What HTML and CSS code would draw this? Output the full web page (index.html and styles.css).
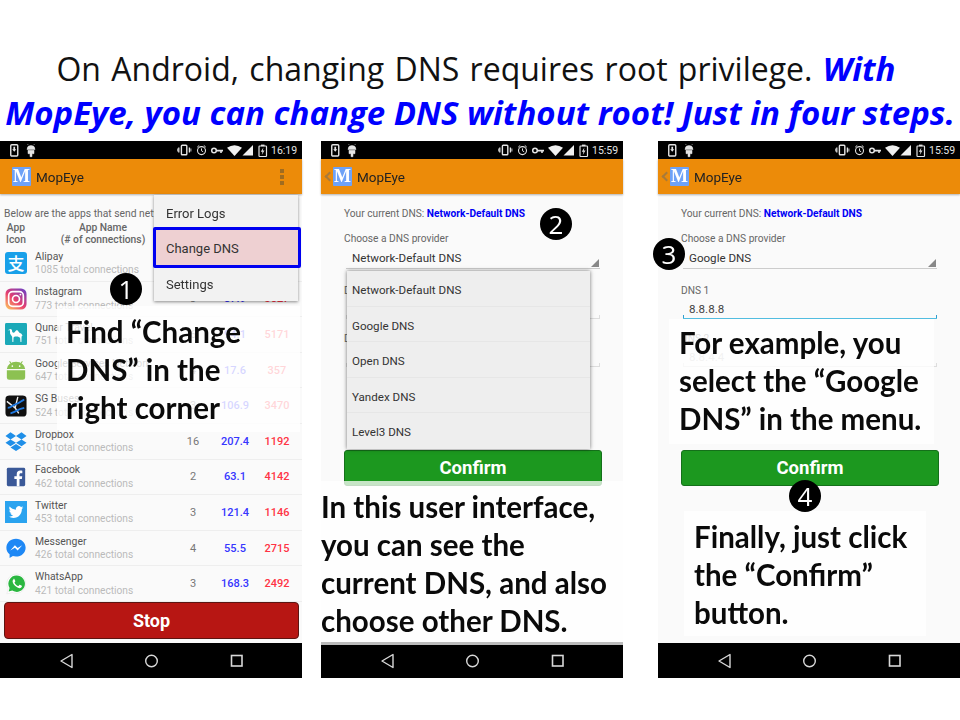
FILE: index.html
```html
<!DOCTYPE html>
<html>
<head>
<meta charset="utf-8">
<title>MopEye DNS</title>
<link rel="stylesheet" href="styles.css">
</head>
<body>

<svg class="sprites">
  <symbol id="status-left" viewBox="0 0 26 18">
    <rect x="0.75" y="3.7" width="7" height="11.3" rx="1" fill="none" stroke="#e4e4e4" stroke-width="1.4"/>
    <path d="M3.4 5.8h1.7v2.4h1.2L4.25 10.7 2.2 8.2h1.2z" fill="#e4e4e4"/>
    <path d="M17 8.6a4 4 0 0 1 8 0zM18 9.3h6v3.4h-2v3h-2v-3h-2zM18.3 4.2l-0.8-1.2M23.7 4.2l0.8-1.2" fill="#e4e4e4" stroke="#e4e4e4" stroke-width="0.5"/>
  </symbol>
  <symbol id="status-right" viewBox="0 0 92 18">
    <rect x="4.4" y="4.2" width="5.4" height="9.6" rx="0.8" fill="none" stroke="#e4e4e4" stroke-width="1.4"/>
    <path d="M1.8 6.5v5M12.4 6.5v5" stroke="#e4e4e4" stroke-width="1.3"/>
    <path d="M0.3 7.5v3M13.9 7.5v3" stroke="#e4e4e4" stroke-width="0.9"/>
    <circle cx="24.5" cy="9.6" r="4" fill="none" stroke="#e4e4e4" stroke-width="1.1"/>
    <path d="M24.5 7.4v2.4l1.7 1M20.2 6.2l2-1.8M28.8 6.2l-2-1.8" fill="none" stroke="#e4e4e4" stroke-width="1"/>
    <circle cx="37" cy="9.5" r="2.3" fill="none" stroke="#e4e4e4" stroke-width="1.5"/>
    <path d="M39 8.7h7v1.7h-1.2v1.5h-1.6v-1.5h-4.2z" fill="#e4e4e4"/>
    <path d="M50 6.8Q57.5 1.8 65 6.8L57.5 15z" fill="#f0f0f0"/>
    <path d="M65.5 14.5L76 14.5V4z" fill="#f0f0f0"/>
    <rect x="82" y="5" width="7.5" height="10.5" rx="0.7" fill="none" stroke="#e4e4e4" stroke-width="1.2"/>
    <rect x="84" y="3.6" width="3.5" height="1.6" fill="#e4e4e4"/>
    <path d="M86.4 6.4L83.8 10.8h1.7l-0.7 3.2 2.7-4.6h-1.7z" fill="#e4e4e4"/>
  </symbol>
  <symbol id="nav-icons" viewBox="0 0 302 35">
    <path d="M72 11.5v13l-11-6.5z" fill="none" stroke="#d8d8d8" stroke-width="1.4" stroke-linejoin="round"/>
    <circle cx="151.5" cy="18" r="5.8" fill="none" stroke="#d8d8d8" stroke-width="1.4"/>
    <rect x="231.5" y="12.5" width="10.5" height="10.5" fill="none" stroke="#d8d8d8" stroke-width="1.6"/>
  </symbol>
</svg>

<h1 class="title"><span class="line-one">On Android, changing DNS requires root privilege. <em>With</em></span><br><em>MopEye, you can change DNS without root! Just in four steps.</em></h1>

<main class="phones">

  <section class="phone">
    <div class="shot">
      <div class="status">
        <svg class="status-left"><use href="#status-left"/></svg>
        <svg class="status-right"><use href="#status-right"/></svg>
        <span class="clock">16:19</span>
      </div>
      <header class="appbar">
        <span class="app-logo">M</span>
        <span class="app-name">MopEye</span>
        <span class="kebab"><i></i><i></i><i></i></span>
      </header>
      <div class="content">
        <p class="intro">Below are the apps that send network data</p>
        <div class="list-head">
          <span class="head-icon">App<br>Icon</span>
          <span class="head-name">App Name<br>(# of connections)</span>
        </div>

        <div class="row">
          <span class="icon alipay">支</span>
          <div class="app"><b>Alipay</b><small>1085 total connections</small></div>
          <span class="count">5</span><span class="speed">88.2</span><span class="rtt">2210</span>
        </div>
        <div class="row">
          <svg class="icon" viewBox="0 0 24 24">
            <defs><linearGradient id="insta" x1="0.1" y1="1" x2="0.9" y2="0">
              <stop offset="0" stop-color="#fdc35f"/><stop offset="0.45" stop-color="#e8406f"/><stop offset="1" stop-color="#6d3fc4"/>
            </linearGradient></defs>
            <rect x="0.5" y="0.5" width="23" height="23" rx="6" fill="url(#insta)"/>
            <rect x="4" y="4" width="16" height="16" rx="4.5" fill="none" stroke="#fff" stroke-width="1.8"/>
            <circle cx="12" cy="12" r="3.8" fill="none" stroke="#fff" stroke-width="1.8"/>
            <circle cx="16.8" cy="7.2" r="1" fill="#fff"/>
          </svg>
          <div class="app"><b>Instagram</b><small>773 total connections</small></div>
          <span class="count">3</span><span class="speed">87.9</span><span class="rtt">3527</span>
        </div>
        <div class="row">
          <svg class="icon" viewBox="0 0 24 24">
            <rect width="24" height="24" rx="1.5" fill="#1ba9b8"/>
            <path d="M3.5 7.5l2.6-1 1.4 0.8 0.4 2.6c1 1.2 2.2 1 3-0.3 1-2.2 2.8-2.4 3.8-0.2 0.7 1.4 2 2 3.2 2.2l1.2 2-1 1.2-0.2 6h-1l-0.4-4.8-2.6-1.4h-3.2l-1.4 1.2-0.2 5h-1l-0.3-5.8-2.2-3.4-0.2-3.6-2.5-0.2z" fill="#fff"/>
          </svg>
          <div class="app"><b>Qunar Travel</b><small>751 total connections</small></div>
          <span class="count">6</span><span class="speed">94.1</span><span class="rtt">5171</span>
        </div>
        <div class="row">
          <svg class="icon" viewBox="0 0 24 24">
            <path d="M2 11a10 8 0 0 1 20 0zM2 12.2h20v8a2.5 2.5 0 0 1-2.5 2.5h-15A2.5 2.5 0 0 1 2 20.200z" fill="#8cc152"/>
            <path d="M6.500 4.800L5 2.500M17.500 4.800L19 2.500" stroke="#8cc152" stroke-width="1.1"/>
            <circle cx="8" cy="7.800" r="0.9" fill="#fff"/><circle cx="16" cy="7.800" r="0.9" fill="#fff"/>
          </svg>
          <div class="app"><b>Google Services Network</b><small>647 total connections</small></div>
          <span class="count">4</span><span class="speed">17.6</span><span class="rtt">357</span>
        </div>
        <div class="row">
          <svg class="icon" viewBox="0 0 24 24">
            <rect x="0.500" y="0.500" width="23" height="23" rx="4" fill="#101010"/>
            <path d="M2 7l9 7 4 6M14 2l-3 12" fill="none" stroke="#eee" stroke-width="1.500"/>
            <path d="M3 14c4 0 5-3 9-4 4-1 6-4 9-5M6 20c4-1 7-3 11-5l4-1" fill="none" stroke="#1e78e0" stroke-width="2"/>
          </svg>
          <div class="app"><b>SG Buses</b><small>524 total connections</small></div>
          <span class="count">3</span><span class="speed">106.9</span><span class="rtt">3470</span>
        </div>
        <div class="row">
          <svg class="icon" viewBox="0 0 24 24">
            <path d="M6 2.500L0.500 6.500l5.500 3.800 6-3.800zM18 2.500l-6 4 6 3.800 5.500-3.800zM0.500 14l5.500 3.800 6-3.800-6-3.700zM18 10.300L12 14l6 3.800 5.500-3.800zM6 19.200l6 3.800 6-3.800-6-3.800z" fill="#1f8fe8"/>
          </svg>
          <div class="app"><b>Dropbox</b><small>510 total connections</small></div>
          <span class="count">16</span><span class="speed">207.4</span><span class="rtt">1192</span>
        </div>
        <div class="row">
          <svg class="icon" viewBox="0 0 24 24">
            <rect x="2" y="2" width="20" height="20" rx="1.500" fill="#3b5998"/>
            <path d="M15.800 22v-7.800h2.600l.4-3h-3V9.300c0-.9.3-1.500 1.500-1.500h1.600V5.100c-.3 0-1.200-.1-2.300-.1-2.300 0-3.800 1.400-3.800 3.900v2.300H10.200v3h2.600V22z" fill="#fff"/>
          </svg>
          <div class="app"><b>Facebook</b><small>462 total connections</small></div>
          <span class="count">2</span><span class="speed">63.1</span><span class="rtt">4142</span>
        </div>
        <div class="row">
          <svg class="icon" viewBox="0 0 24 24">
            <rect width="24" height="24" fill="#2aa3ef"/>
            <g transform="translate(4 4) scale(0.667)">
              <path d="M23.953 4.570a10 10 0 01-2.825.775 4.958 4.958 0 002.163-2.723c-.951.555-2.005.959-3.127 1.184a4.920 4.920 0 00-8.384 4.482C7.690 8.095 4.067 6.130 1.640 3.162a4.822 4.822 0 00-.666 2.475c0 1.710.870 3.213 2.188 4.096a4.904 4.904 0 01-2.228-.616v.060a4.923 4.923 0 003.946 4.827 4.996 4.996 0 01-2.212.085 4.936 4.936 0 004.604 3.417 9.867 9.867 0 01-6.102 2.105c-.390 0-.779-.023-1.170-.067a13.995 13.995 0 007.557 2.209c9.053 0 13.998-7.496 13.998-13.985 0-.210 0-.420-.015-.630A9.935 9.935 0 0024 4.590z" fill="#fff"/>
            </g>
          </svg>
          <div class="app"><b>Twitter</b><small>453 total connections</small></div>
          <span class="count">3</span><span class="speed">121.4</span><span class="rtt">1146</span>
        </div>
        <div class="row">
          <svg class="icon" viewBox="0 0 24 24">
            <path d="M12 1.800C6 1.800 1.500 6.100 1.500 11.600c0 3 1.300 5.500 3.500 7.200v4l3.600-2c1.100.3 2.200.5 3.400.5 6 0 10.500-4.300 10.500-9.700S18 1.800 12 1.800z" fill="#1e88f5"/>
            <path d="M5.800 14.800l5-5.800 3 3 5-3-5 5.600-3-3z" fill="#fff"/>
          </svg>
          <div class="app"><b>Messenger</b><small>426 total connections</small></div>
          <span class="count">4</span><span class="speed">55.5</span><span class="rtt">2715</span>
        </div>
        <div class="row">
          <svg class="icon" viewBox="0 0 24 24">
            <path d="M12.500 1.200a10.500 10.500 0 0 0-9 15.800L2 22.800l5.900-1.500a10.500 10.500 0 1 0 4.600-20.100z" fill="#fff" stroke="#ddd" stroke-width="0.500"/>
            <path d="M12.500 2.800a8.900 8.900 0 0 0-7.500 13.500l-1 3.800 3.900-1a8.900 8.900 0 1 0 4.600-16.300z" fill="#2bb741"/>
            <path d="M9.200 7c-.5.500-1 1.200-.9 2.300.2 1.800 1.500 3.700 2.900 5 1.600 1.400 3.300 2.200 4.800 2.200 1 0 1.900-.7 2.300-1.500.2-.5.2-.9.1-1l-2.300-1.100c-.2 0-.4 0-.5.1l-.9 1.100c-.2.2-.3.2-.6.1-1.400-.6-3-2-3.700-3.500-.1-.3 0-.4.2-.6l.6-.8c.1-.2.1-.4 0-.5l-1-2.200c-.1-.3-.6-.3-1 0z" fill="#fff"/>
          </svg>
          <div class="app"><b>WhatsApp</b><small>421 total connections</small></div>
          <span class="count">3</span><span class="speed">168.3</span><span class="rtt">2492</span>
        </div>

        <button class="stop">Stop</button>
      </div>
      <svg class="nav"><use href="#nav-icons"/></svg>

      <div class="menu">
        <div class="menu-item">Error Logs</div>
        <div class="menu-item active">Change DNS</div>
        <div class="menu-item last">Settings</div>
      </div>
    </div>
    <div class="note note-1">Find “Change<br>DNS” in the<br>right corner</div>
    <span class="badge badge-1">1</span>
  </section>

  <section class="phone second">
    <div class="shot">
      <div class="status">
        <svg class="status-left"><use href="#status-left"/></svg>
        <svg class="status-right"><use href="#status-right"/></svg>
        <span class="clock">15:59</span>
      </div>
      <header class="appbar">
        <span class="back"></span>
        <span class="app-logo">M</span>
        <span class="app-name">MopEye</span>
      </header>
      <div class="content form">
        <p class="current">Your current DNS: <b>Network-Default DNS</b></p>
        <p class="label">Choose a DNS provider</p>
        <div class="select">Network-Default DNS</div>
        <p class="label dns-label">DNS 1</p>
        <div class="input">&nbsp;</div>
        <p class="label dns-label-2">DNS 2</p>
        <div class="input">&nbsp;</div>
        <button class="confirm">Confirm</button>
      </div>
      <svg class="nav"><use href="#nav-icons"/></svg>

      <div class="dropdown">
        <div class="option">Network-Default DNS</div>
        <div class="option">Google DNS</div>
        <div class="option">Open DNS</div>
        <div class="option">Yandex DNS</div>
        <div class="option">Level3 DNS</div>
      </div>
    </div>
    <div class="note note-2">In this user interface,<br>you can see the<br>current DNS, and also<br>choose other DNS.</div>
    <span class="badge badge-2">2</span>
  </section>

  <section class="phone third">
    <div class="shot">
      <div class="status">
        <svg class="status-left"><use href="#status-left"/></svg>
        <svg class="status-right"><use href="#status-right"/></svg>
        <span class="clock">15:59</span>
      </div>
      <header class="appbar">
        <span class="back"></span>
        <span class="app-logo">M</span>
        <span class="app-name">MopEye</span>
      </header>
      <div class="content form">
        <p class="current">Your current DNS: <b>Network-Default DNS</b></p>
        <p class="label">Choose a DNS provider</p>
        <div class="select">Google DNS</div>
        <p class="label dns-label">DNS 1</p>
        <div class="input focused">8.8.8.8</div>
        <p class="label dns-label-2">DNS 2</p>
        <div class="input muted">8.8.4.4</div>
        <button class="confirm">Confirm</button>
      </div>
      <svg class="nav"><use href="#nav-icons"/></svg>
    </div>
    <div class="note note-3">For example, you<br>select the “Google<br>DNS” in the menu.</div>
    <div class="note note-4">Finally, just click<br>the “Confirm”<br>button.</div>
    <span class="badge badge-3">3</span>
    <span class="badge badge-4">4</span>
  </section>

</main>
</body>
</html>
```

FILE: styles.css
```css
body {
  margin: 0;
  width: 960px;
  height: 720px;
  overflow: hidden;
  background: #fff;
  font-family: Roboto, "Liberation Sans", sans-serif;
}

.sprites {
  position: absolute;
  width: 0;
  height: 0;
}

.title {
  margin: 0;
  padding-top: 47px;
  font-family: "Open Sans", "DejaVu Sans", sans-serif;
  font-size: 32px;
  font-weight: 400;
  line-height: 44px;
  word-spacing: 2px;
  text-align: center;
  white-space: nowrap;
  color: #111;
  height: 94px;
}

.line-one {
  padding-right: 8px;
}

.title em {
  font-size: 33px;
  font-weight: 700;
  font-style: italic;
  word-spacing: 0;
  color: #0000ff;
}

.phones {
  display: flex;
}

.phone {
  position: relative;
  width: 302px;
  height: 537px;
  flex: none;
}

.second {
  margin-left: 19px;
}

.third {
  margin-left: 35px;
}

.shot {
  position: relative;
  display: flex;
  flex-direction: column;
  height: 100%;
  background: #fafafa;
  filter: blur(0.35px);
}

/* status bar */
.status {
  display: flex;
  align-items: center;
  height: 18px;
  background: #000;
  padding-left: 10px;
}

.status svg {
  height: 18px;
}

.status-left {
  width: 26px;
}

.status-right {
  width: 92px;
  margin-left: 141px;
}

.clock {
  margin-left: 2px;
  font-size: 10.5px;
  color: #e4e4e4;
}

/* orange bar */
.appbar {
  display: flex;
  align-items: center;
  height: 35px;
  padding-left: 12px;
  background: #ec8b09;
  box-shadow: 0 1px 2px rgba(0, 0, 0, 0.3);
  position: relative;
}

.back {
  position: absolute;
  left: 5px;
  top: 14px;
  width: 5px;
  height: 5px;
  border-left: 2px solid #a87a3a;
  border-bottom: 2px solid #a87a3a;
  transform: rotate(45deg);
}

.app-logo {
  width: 19px;
  height: 19px;
  background: #6ea2f7;
  border-radius: 1px;
  color: #fff;
  font-family: "Liberation Serif", serif;
  font-size: 18px;
  font-weight: 700;
  line-height: 19px;
  text-align: center;
}

.app-name {
  margin-left: 5px;
  font-size: 13.5px;
  color: #222;
}

.kebab {
  margin-left: auto;
  margin-right: 18px;
  display: flex;
  flex-direction: column;
  gap: 2px;
}

.kebab i {
  width: 4px;
  height: 4px;
  background: #a06c20;
}

/* first screen */
.content {
  flex: 1;
  min-height: 0;
  overflow: hidden;
}

.intro {
  margin: 13px 0 0 4px;
  font-size: 10.3px;
  line-height: 14px;
  color: #666;
  white-space: nowrap;
}

.list-head {
  display: flex;
  height: 24px;
  margin-top: 1px;
  font-size: 10.3px;
  font-weight: 500;
  line-height: 12px;
  color: #666;
  text-align: center;
}

.head-icon {
  width: 32px;
}

.head-name {
  width: 142px;
}

.row {
  display: grid;
  grid-template-columns: 35px 137px 42px 42px 42px;
  align-items: center;
  box-sizing: border-box;
  height: 35.6px;
  border-bottom: 1px solid #eee;
  font-size: 11px;
  text-align: center;
}

.icon {
  display: block;
  width: 22px;
  height: 22px;
  margin-left: 5px;
}

.alipay {
  background: #18a0e9;
  border-radius: 3px;
  color: #fff;
  font-family: "Noto Sans CJK SC", sans-serif;
  font-size: 17px;
  font-weight: 500;
  line-height: 22px;
}

.app {
  text-align: left;
  white-space: nowrap;
  line-height: 13.5px;
}

.app b {
  display: block;
  font-size: 10.4px;
  font-weight: 400;
  color: #555;
}

.app small {
  display: block;
  font-size: 10.2px;
  color: #bbb;
}

.count {
  color: #777;
}

.speed {
  font-weight: 500;
  color: #3636ff;
}

.rtt {
  font-weight: 500;
  color: #ff3344;
}

.stop {
  display: block;
  box-sizing: border-box;
  width: 295px;
  height: 37px;
  margin: 0 0 0 4px;
  padding: 0;
  background: #b71613;
  border: 1px solid #5c1512;
  border-radius: 4px;
  color: #fff;
  font-family: inherit;
  font-size: 18px;
  font-weight: 700;
}

.nav {
  display: block;
  width: 302px;
  height: 35px;
  flex: none;
  background: #000;
}

.menu {
  position: absolute;
  left: 154px;
  top: 54px;
  width: 144px;
  background: #f2f2f2;
  box-shadow: 0 1px 3px rgba(0, 0, 0, 0.45);
  font-size: 13px;
  color: #333;
}

.menu-item {
  display: flex;
  align-items: center;
  box-sizing: border-box;
  height: 36px;
  padding-left: 12px;
}

.menu-item.active {
  position: relative;
  height: 41px;
  margin: -4px -3px 0 -1px;
  padding: 2px 0 0 10px;
  background: #eed0d2;
  border: 3px solid #0000f0;
  border-radius: 2px;
}

.menu-item.last {
  height: 33px;
}

/* dns form */
.form {
  padding: 0 21px 0 23px;
  font-size: 10.2px;
  color: #666;
}

.form p {
  margin: 0;
  line-height: 14px;
}

.current {
  padding-top: 13px;
}

.current b {
  color: #0000f5;
  font-weight: 700;
}

.label {
  margin-top: 11px !important;
}

.select {
  position: relative;
  box-sizing: border-box;
  height: 23px;
  margin: 0 2px;
  padding: 5px 0 0 6px;
  font-size: 11.6px;
  line-height: 15px;
  color: #333;
  border-bottom: 1px solid #ccc;
}

.select::after {
  content: "";
  position: absolute;
  right: 1px;
  bottom: 1px;
  border-left: 8px solid transparent;
  border-bottom: 8px solid #888;
}

.dns-label {
  margin-top: 15px !important;
}

.dns-label-2 {
  margin-top: 13px !important;
}

.input {
  box-sizing: border-box;
  height: 21px;
  margin: 0 2px;
  padding: 4px 0 0 6px;
  font-size: 11.6px;
  line-height: 15px;
  color: #444;
  border-bottom: 1px solid #ddd;
  background:
    linear-gradient(#ddd, #ddd) left bottom / 1px 3px no-repeat,
    linear-gradient(#ddd, #ddd) right bottom / 1px 3px no-repeat;
}

.input.focused {
  border-bottom: 1px solid #52bde0;
  background:
    linear-gradient(#2f9fd0, #2f9fd0) left bottom / 1px 3px no-repeat,
    linear-gradient(#2f9fd0, #2f9fd0) right bottom / 1px 3px no-repeat;
}

.input.muted {
  color: #bbb;
}

.confirm {
  display: block;
  box-sizing: border-box;
  width: 258px;
  height: 36px;
  margin-top: 83px;
  padding: 0;
  background: #1c981f;
  border: 1px solid #14701a;
  border-radius: 3px;
  color: #fff;
  font-family: inherit;
  font-size: 18.5px;
  font-weight: 700;
}

.dropdown {
  position: absolute;
  left: 26px;
  top: 130px;
  width: 243px;
  background: #eee;
  box-shadow: 0 0 4px rgba(0, 0, 0, 0.55);
  font-size: 11.6px;
  color: #333;
}

.option {
  box-sizing: border-box;
  height: 35.6px;
  padding: 12px 0 0 5px;
  line-height: 15px;
  border-bottom: 1px solid #e6e6e6;
}

.option:last-child {
  border-bottom: 0;
}

/* slide annotations */
.note {
  position: absolute;
  box-sizing: border-box;
  background: rgba(255, 255, 255, 0.8);
  font-family: Lato, "Open Sans", sans-serif;
  font-size: 29.5px;
  font-weight: 700;
  line-height: 38px;
  color: #0a0a0a;
  white-space: nowrap;
}

.note-1 {
  left: 57px;
  top: 165px;
  width: 243px;
  height: 126px;
  padding: 7px 0 0 9px;
}

.note-2 {
  left: 0;
  top: 340px;
  width: 302px;
  height: 164px;
  padding: 7px 0 0 0;
  background: rgba(255, 255, 255, 0.75);
  border-bottom: 3px solid #bbb;
}

.note-3 {
  left: 11px;
  top: 178px;
  width: 265px;
  height: 125px;
  padding: 5px 0 0 10px;
}

.note-4 {
  left: 26px;
  top: 370px;
  width: 242px;
  height: 125px;
  padding: 7px 0 0 10px;
}

.badge {
  position: absolute;
  width: 32px;
  height: 32px;
  border-radius: 50%;
  background: #000;
  color: #fff;
  font-family: "Open Sans", sans-serif;
  font-size: 26px;
  line-height: 32px;
  text-align: center;
}

.badge-1 {
  left: 110px;
  top: 132px;
}

.badge-2 {
  left: 219px;
  top: 67px;
}

.badge-3 {
  left: -5px;
  top: 97px;
}

.badge-4 {
  left: 131px;
  top: 339px;
}
```
